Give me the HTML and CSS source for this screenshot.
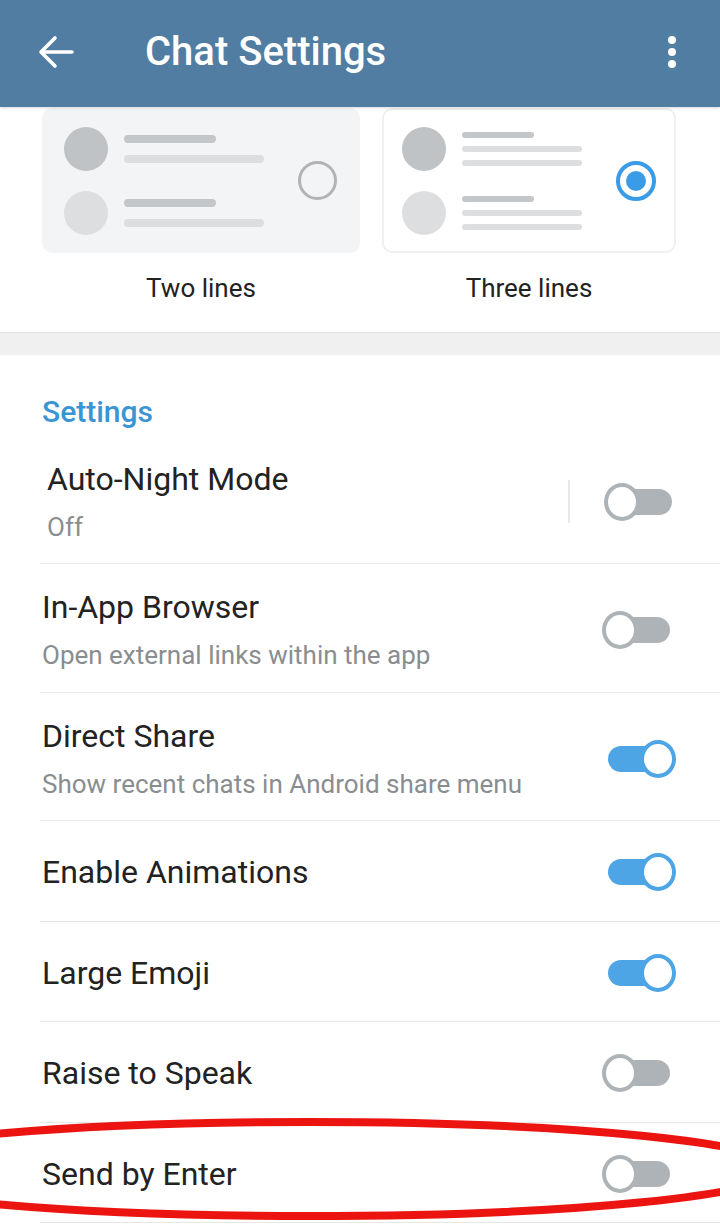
FILE: index.html
```html
<!DOCTYPE html>
<html lang="en">
<head>
    <meta charset="UTF-8">
    <title>Chat Settings</title>
    <link rel="stylesheet" href="styles.css">
</head>
<body>
    <header class="toolbar">
        <svg class="back" width="48" height="48" viewBox="0 0 48 48">
            <path d="M9 24H40M23 10L9 24L23 38" fill="none" stroke="#fff" stroke-width="3.6" stroke-linecap="round" stroke-linejoin="round"/>
        </svg>
        <h1>Chat Settings</h1>
        <svg class="menu" width="8" height="34" viewBox="0 0 8 34">
            <circle cx="4" cy="5" r="4" fill="#fff"/>
            <circle cx="4" cy="17" r="4" fill="#fff"/>
            <circle cx="4" cy="29" r="4" fill="#fff"/>
        </svg>
    </header>

    <section class="layouts">
        <div class="option">
            <div class="card card--two">
                <div class="preview">
                    <div class="item">
                        <span class="avatar"></span>
                        <div class="lines">
                            <span class="line short dark"></span>
                            <span class="line long"></span>
                        </div>
                    </div>
                    <div class="item">
                        <span class="avatar light"></span>
                        <div class="lines">
                            <span class="line short dark"></span>
                            <span class="line long"></span>
                        </div>
                    </div>
                </div>
                <span class="radio"></span>
            </div>
            <div class="option-label">Two lines</div>
        </div>
        <div class="option">
            <div class="card card--three">
                <div class="preview">
                    <div class="item">
                        <span class="avatar"></span>
                        <div class="lines">
                            <span class="line short dark"></span>
                            <span class="line long"></span>
                            <span class="line long"></span>
                        </div>
                    </div>
                    <div class="item">
                        <span class="avatar light"></span>
                        <div class="lines">
                            <span class="line short dark"></span>
                            <span class="line long"></span>
                            <span class="line long"></span>
                        </div>
                    </div>
                </div>
                <span class="radio checked"></span>
            </div>
            <div class="option-label">Three lines</div>
        </div>
    </section>

    <div class="gap"></div>

    <section class="settings">
        <h2>Settings</h2>

        <div class="row row--night">
            <div class="text">
                <div class="title">Auto-Night Mode</div>
                <div class="sub">Off</div>
            </div>
            <span class="vline"></span>
            <span class="switch"></span>
        </div>
        <div class="row">
            <div class="text">
                <div class="title">In-App Browser</div>
                <div class="sub">Open external links within the app</div>
            </div>
            <span class="switch"></span>
        </div>
        <div class="row">
            <div class="text">
                <div class="title">Direct Share</div>
                <div class="sub">Show recent chats in Android share menu</div>
            </div>
            <span class="switch on"></span>
        </div>
        <div class="row row--single">
            <div class="title">Enable Animations</div>
            <span class="switch on"></span>
        </div>
        <div class="row row--single">
            <div class="title">Large Emoji</div>
            <span class="switch on"></span>
        </div>
        <div class="row row--single">
            <div class="title">Raise to Speak</div>
            <span class="switch"></span>
        </div>
        <div class="row row--single">
            <div class="title">Send by Enter</div>
            <span class="switch"></span>
        </div>
    </section>

    <svg class="mark" width="720" height="140" viewBox="0 1100 720 140">
        <ellipse cx="309" cy="1169" rx="471" ry="47" fill="none" stroke="#ec1410" stroke-width="8"/>
    </svg>
</body>
</html>
```

FILE: styles.css
```css
body {
    margin: 0;
    width: 720px;
    height: 1227px;
    overflow: hidden;
    position: relative;
    background: #fff;
    font-family: Roboto, "Noto Sans", sans-serif;
    color: #222;
}

.toolbar {
    height: 107px;
    box-sizing: border-box;
    padding: 0 44px 4px 32px;
    background: #517da2;
    display: flex;
    align-items: center;
    position: relative;
    z-index: 2;
    box-shadow: 0 1px 3px rgba(0,0,0,0.15);
}
.toolbar h1 {
    margin: 0 0 0 65px;
    flex: 1;
    font-size: 40px;
    font-weight: 500;
    color: #fff;
    line-height: 48px;
}

.layouts {
    display: grid;
    grid-template-columns: 318px 294px;
    gap: 22px;
    padding: 1px 44px 0 42px;
    height: 225px;
    box-sizing: border-box;
}
.card {
    height: 145px;
    box-sizing: border-box;
    border-radius: 10px;
    display: flex;
    align-items: center;
    justify-content: space-between;
}
.card--two {
    background: #f3f4f5;
    padding: 0 23px 0 22px;
}
.card--three {
    border: 2px solid #eef0f1;
    padding: 0 18px 0 18px;
}
.preview {
    display: flex;
    flex-direction: column;
    gap: 20px;
}
.item {
    display: flex;
    align-items: center;
    gap: 16px;
}
.avatar {
    width: 44px;
    height: 44px;
    border-radius: 50%;
    background: #c0c3c6;
}
.avatar.light {
    background: #dcdee0;
}
.lines {
    display: flex;
    flex-direction: column;
}
.line {
    display: block;
    border-radius: 4px;
    background: #dcdee0;
}
.line.dark {
    background: #c4c7ca;
}
.card--two .lines {
    gap: 12px;
}
.card--two .line {
    height: 8px;
}
.card--two .short { width: 92px; }
.card--two .long { width: 140px; }
.card--three .lines {
    gap: 8px;
}
.card--three .line {
    height: 6px;
    border-radius: 3px;
}
.card--three .short { width: 72px; }
.card--three .long { width: 120px; }

.radio {
    width: 39px;
    height: 39px;
    box-sizing: border-box;
    border-radius: 50%;
    border: 3px solid #b3b3b3;
    display: flex;
    align-items: center;
    justify-content: center;
}
.radio.checked {
    width: 40px;
    height: 40px;
    border: 4px solid #3a9be6;
}
.radio.checked::after {
    content: "";
    width: 20px;
    height: 20px;
    border-radius: 50%;
    background: #3a9be6;
}
.option-label {
    margin-top: 20px;
    text-align: center;
    font-size: 26px;
    line-height: 30px;
}

.gap {
    height: 23px;
    background: #f0f0f0;
    box-shadow: inset 0 1px 1px rgba(0,0,0,0.06);
}

.settings h2 {
    margin: 0;
    padding: 40.5px 0 8px 42px;
    font-size: 30px;
    font-weight: 500;
    line-height: 32px;
    color: #3a95d5;
}
.row {
    margin-left: 40px;
    padding: 25px 44px 20.5px 2px;
    border-bottom: 1px solid #e7e7e7;
    display: flex;
    align-items: center;
}
.row--single {
    padding-top: 32px;
    padding-bottom: 29.5px;
}
.row--night {
    padding-left: 7px;
    padding-right: 42px;
}
.text {
    flex: 1;
}
.row--single .title {
    flex: 1;
}
.title {
    font-size: 32px;
    line-height: 36px;
}
.sub {
    margin-top: 14px;
    font-size: 26px;
    line-height: 32px;
    color: #8a8d90;
}
.vline {
    width: 2px;
    height: 43px;
    background: #e8e8e8;
    margin-right: 34px;
}

.switch {
    width: 74px;
    height: 38px;
    position: relative;
    flex: none;
}
.switch::before {
    content: "";
    position: absolute;
    left: 6px;
    right: 6px;
    top: 6px;
    height: 26px;
    border-radius: 13px;
    background: #adb3b7;
}
.switch::after {
    content: "";
    position: absolute;
    left: 0;
    top: 0;
    width: 36px;
    height: 38px;
    box-sizing: border-box;
    border-radius: 50%;
    border: 4px solid #adb3b7;
    background: #fff;
}
.switch.on::before {
    background: #4da5e6;
}
.switch.on::after {
    left: auto;
    right: 0;
    border-color: #4da5e6;
}

.mark {
    position: absolute;
    left: 0;
    top: 1100px;
    pointer-events: none;
}
```
